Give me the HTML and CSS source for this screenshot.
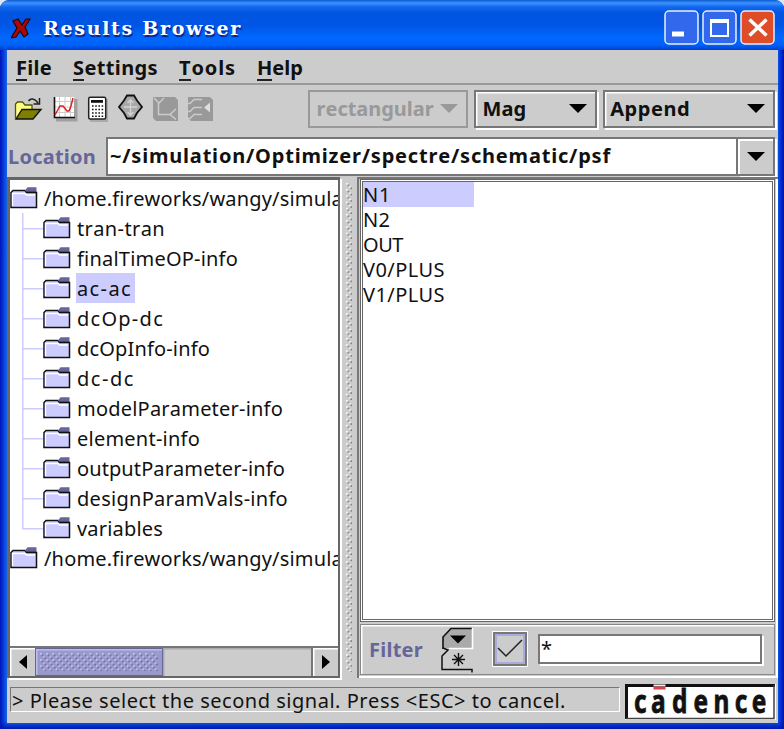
FILE: index.html
```html
<!DOCTYPE html>
<html lang="en">
<head>
<meta charset="utf-8">
<title>Results Browser</title>
<link rel="stylesheet" href="styles.css">
</head>
<body>
<svg class="defs" width="0" height="0">
  <defs>
    <pattern id="bumps" width="6.2" height="6.2" patternUnits="userSpaceOnUse">
      <path d="M0 0h1.6v1.6H0zM3.1 3.1h1.6v1.6H3.1z" fill="#fff"/>
      <path d="M1.5 1.5h1.6v1.6H1.5zM4.6 4.6h1.6v1.6H4.6z" fill="#777"/>
    </pattern>
    <pattern id="thumb-bumps" width="6.2" height="6.2" patternUnits="userSpaceOnUse">
      <path d="M0 0h1.6v1.6H0zM3.1 3.1h1.6v1.6H3.1z" fill="#ccf"/>
      <path d="M1.5 1.5h1.6v1.6H1.5zM4.6 4.6h1.6v1.6H4.6z" fill="#669"/>
    </pattern>
    <symbol id="folder" viewBox="0 0 28 24">
      <path d="M1 21.5V6.5L3 4.5H15L16.500 6.500H26.500V21.500Z" fill="#ccf" stroke="#111" stroke-width="1.5"/>
      <path d="M2.500 20V7.500H15L16.500 9H25" fill="none" stroke="#fff" stroke-width="1.300"/>
      <path d="M15 4.500L17.500 1.200H26.500V5H15.500Z" fill="#669"/>
      <path d="M16 5.500H26.500" stroke="#447" stroke-width="1"/>
    </symbol>
  </defs>
</svg>
<div class="window">
  <header class="titlebar">
    <svg class="app-icon" width="20" height="22" viewBox="11 17 20 22"><path d="M13 21l5-2 4 6 4-6 4 0-5 8 3 7-4 3-4-6-4 6-5 1 6-10z" fill="#a80808" stroke="#300" stroke-width="1.200"/></svg>
    <h1><span class="t" data-w="198">Results Browser</span></h1>
    <div class="controls">
      <svg width="35" height="35"><rect class="cb blue" x="1" y="1" width="33" height="33" rx="4"/><path d="M8 21.500h12v5H8z" fill="#fff"/></svg>
      <svg width="35" height="35"><rect class="cb blue" x="1" y="1" width="33" height="33" rx="4"/><path d="M8 9h19v18H8zM10 13v12h15V13z" fill="#fff" fill-rule="evenodd"/></svg>
      <svg width="35" height="35"><rect class="cb red" x="1" y="1" width="33" height="33" rx="4"/><path d="M9.500 9.500l17 16M26.500 9.500l-17 16" stroke="#fff" stroke-width="3.500"/></svg>
    </div>
  </header>
  <main class="client">
    <nav class="menubar">
      <span class="t" data-w="35"><u>F</u>ile</span>
      <span class="t" data-w="84"><u>S</u>ettings</span>
      <span class="t" data-w="56"><u>T</u>ools</span>
      <span class="t" data-w="45"><u>H</u>elp</span>
    </nav>
    <div class="toolbar">
      <div class="tools">
        <svg width="30" height="32" viewBox="14 92 30 32"><path d="M15.500 118.500V104l2-2h5l2.500 3h7v5" fill="#ffff80" stroke="#550" stroke-width="1.300"/><path d="M16 119l6-9.500h19l-8 9.500z" fill="#808000" stroke="#111" stroke-width="1.400"/><path d="M28.500 101c2-3 6-3 9.500 2M39.500 98v6h-6" fill="none" stroke="#222" stroke-width="1.500"/></svg>
        <svg width="28" height="32" viewBox="52 92 28 32"><path d="M57 99h21.500v22.500H57z" fill="#a0a0a0"/><path d="M55 97h20v20H55z" fill="#fff"/><path d="M60.500 97v20M66 97v20M71.500 97v20M55 101.500h20M55 107h20M55 112.500h20" stroke="#ccc" stroke-width="1"/><path d="M55.500 97v20.500H76" fill="none" stroke="#111" stroke-width="1.600"/><path d="M56 115l5-9h3l4 5h2l2-5 2-8" fill="none" stroke="#d22" stroke-width="1.500"/></svg>
        <svg width="24" height="32" viewBox="86 92 24 32"><path d="M90 99h18v23H90z" fill="#aaa"/><rect x="88.700" y="97.200" width="17" height="21.800" rx="1.500" fill="#fff" stroke="#222" stroke-width="1.500"/><path d="M91 100h12v2.800H91z" fill="#111"/><path d="M92 106h12M92 109.500h12M92 113h12M92 116.300h12" stroke="#111" stroke-width="1.500" stroke-dasharray="1.600 1.600"/></svg>
        <svg width="28" height="32" viewBox="117 92 28 32"><path d="M127 95.500h7l3 5 5 6.500-5 6-3 5.500h-7l-3-5.500-5-6 5-6.500z" fill="#a8a8a8" stroke="#111" stroke-width="1.800"/><path d="M130.500 99v17M124 107h13M127.500 103l3-3 3 3M127.500 112l3 3 3-3" fill="none" stroke="#d4d4d4" stroke-width="1.300"/></svg>
        <svg width="28" height="32" viewBox="152 92 28 32"><path d="M153 97h22l3 3v21h-22l-3-3z" fill="#999"/><path d="M154 98l5 5 5-5M158.500 103v11.500h11M176 109l-6 5.500 6 5" fill="none" stroke="#ccc" stroke-width="1.500"/></svg>
        <svg width="28" height="32" viewBox="185 92 28 32"><path d="M186 97h22l3 3v21h-22l-3-3z" fill="#999"/><path d="M186 103.500h2l4-4h8M186 111.500h2l4-4h8M186 118.500h2l4-4h8" fill="none" stroke="#ccc" stroke-width="1.500"/><path d="M202 107.500l6-5v10z" fill="#ddd"/></svg>
      </div>
      <div class="combo off rect"><span class="t" data-w="116">rectangular</span><svg width="18" height="10"><path d="M0 0h18L9 9z"/></svg></div>
      <div class="combo mag"><span class="t" data-w="43">Mag</span><svg width="18" height="10"><path d="M0 0h18L9 9z"/></svg></div>
      <div class="combo append"><span class="t" data-w="79">Append</span><svg width="18" height="10"><path d="M0 0h18L9 9z"/></svg></div>
    </div>
    <div class="location">
      <label><span class="t" data-w="87">Location</span></label>
      <div class="path"><span class="t" data-w="500">~/simulation/Optimizer/spectre/schematic/psf</span></div>
      <div class="drop"><svg width="18" height="10"><path d="M0 0h18L9 9z"/></svg></div>
    </div>
    <div class="split">
      <section class="left">
        <ul class="tree">
          <li><svg class="f"><use href="#folder"/></svg><span class="label"><span class="t" data-w="298">/home.fireworks/wangy/simula</span></span></li>
          <li class="c"><i></i><svg class="f"><use href="#folder"/></svg><span class="label"><span class="t" data-w="87">tran-tran</span></span></li>
          <li class="c"><i></i><svg class="f"><use href="#folder"/></svg><span class="label"><span class="t" data-w="160">finalTimeOP-info</span></span></li>
          <li class="c"><i></i><svg class="f"><use href="#folder"/></svg><span class="label sel"><span class="t" data-w="54">ac-ac</span></span></li>
          <li class="c"><i></i><svg class="f"><use href="#folder"/></svg><span class="label"><span class="t" data-w="86">dcOp-dc</span></span></li>
          <li class="c"><i></i><svg class="f"><use href="#folder"/></svg><span class="label"><span class="t" data-w="132">dcOpInfo-info</span></span></li>
          <li class="c"><i></i><svg class="f"><use href="#folder"/></svg><span class="label"><span class="t" data-w="57">dc-dc</span></span></li>
          <li class="c"><i></i><svg class="f"><use href="#folder"/></svg><span class="label"><span class="t" data-w="205">modelParameter-info</span></span></li>
          <li class="c"><i></i><svg class="f"><use href="#folder"/></svg><span class="label"><span class="t" data-w="122">element-info</span></span></li>
          <li class="c"><i></i><svg class="f"><use href="#folder"/></svg><span class="label"><span class="t" data-w="207">outputParameter-info</span></span></li>
          <li class="c"><i></i><svg class="f"><use href="#folder"/></svg><span class="label"><span class="t" data-w="210">designParamVals-info</span></span></li>
          <li class="c last"><i></i><svg class="f"><use href="#folder"/></svg><span class="label"><span class="t" data-w="85">variables</span></span></li>
          <li><svg class="f"><use href="#folder"/></svg><span class="label"><span class="t" data-w="298">/home.fireworks/wangy/simula</span></span></li>
        </ul>
        <div class="scroll">
          <div class="arrow"><svg width="8" height="14"><path d="M8 0v14L0 7z"/></svg></div>
          <div class="thumb"><svg width="118" height="18"><rect width="118" height="18" fill="url(#thumb-bumps)"/></svg></div>
          <div class="track"></div>
          <div class="arrow end"><svg width="8" height="14"><path d="M0 0v14L8 7z"/></svg></div>
        </div>
      </section>
      <div class="divider"><svg width="6.200" height="489"><rect width="6.200" height="489" fill="url(#bumps)"/></svg></div>
      <section class="right">
        <ul class="list">
          <li class="sel"><span class="t" data-w="27">N1</span></li>
          <li><span class="t" data-w="26">N2</span></li>
          <li><span class="t" data-w="39">OUT</span></li>
          <li><span class="t" data-w="81">V0/PLUS</span></li>
          <li><span class="t" data-w="81">V1/PLUS</span></li>
        </ul>
        <div class="filter">
          <label><span class="t" data-w="53">Filter</span></label>
          <svg class="toggle" width="34" height="46" viewBox="440 627 34 46"><path d="M443 648V637l8-8h21v19z" fill="#aaa"/><path d="M443 649V637l8-8.500h21" fill="none" stroke="#111" stroke-width="1.600"/><path d="M472.500 628v20.500H449" fill="none" stroke="#fff" stroke-width="1.600"/><path d="M450 635.500h16l-8 8z"/><path d="M443 648l5 2-6 6v13.500h6M448 669.500h24v3" fill="none" stroke="#111" stroke-width="1.500"/><path d="M458.500 653v13M452 659.500h13M454 655l9 9M463 655l-9 9" stroke="#111" stroke-width="1.400"/></svg>
          <div class="check"><svg width="26" height="20"><path d="M1 9l8 8L25 1" fill="none" stroke="#222" stroke-width="1.500"/></svg></div>
          <div class="input">*</div>
        </div>
      </section>
    </div>
    <footer class="status">
      <div class="message"><span class="t" data-w="553">&gt; Please select the second signal. Press &lt;ESC&gt; to cancel.</span></div>
      <svg class="logo" width="151" height="36" viewBox="625 685 151 36"><path d="M625 685h151v36H625z" fill="#fff"/><path d="M626.500 720V686.500H775" fill="none" stroke="#111" stroke-width="3"/><path d="M774 686v33.500H626" fill="none" stroke="#444" stroke-width="1.500"/><path d="M653.500 685.500h12v2h-12z" fill="#eee"/><path d="M653.500 687.500h12v3h-12z" fill="#d8404c"/><text class="logotype" transform="translate(634 713.500) scale(.74 1)" x="0 23 51.500 80.500 107.500 136 159" y="0">cadence</text></svg>
    </footer>
  </main>
</div>
<script src="fit.js"></script>
</body>
</html>
```
FILE: fit.js
```js
// Tracks each label out or in so that it fills its nominal width.
document.querySelectorAll('.t').forEach(function (el) {
  var n = el.textContent.length;
  var w = el.getBoundingClientRect().width;
  el.style.letterSpacing = ((Number(el.dataset.w) + 1 - w) / n).toFixed(3) + 'px';
});
```
FILE: styles.css
```css
* { box-sizing: border-box; }
body { margin: 0; background: #dde4f4; font: 20px/24px "Noto Sans", sans-serif; color: #111; overflow: hidden; }
ul { list-style: none; margin: 0; padding: 0; }
svg { display: block; flex: none; }
.defs { position: absolute; }
.t { display: inline-block; white-space: pre; font-kerning: none; font-variant-ligatures: none; }

.window { width: 784px; height: 729px; padding: 0 6px 6px 7px; border-radius: 9px 9px 0 0; display: flex; flex-direction: column;
  background: linear-gradient(90deg, #0014bd 0, #0538d4 3px, #1264ed 7px, #0a50e4 778px, #0030d8 781px, #000f98 784px);
  box-shadow: inset 0 -6px 5px -2px #0018b0; }
.titlebar { height: 50px; flex: none; margin: 0 -6px 0 -7px; padding: 5px 9px 0 11px; display: flex; align-items: center; border-radius: 9px 9px 0 0;
  background: linear-gradient(#0a5bd0 0, #3c94ff 3px, #1266ee 7px, #0054e0 13px, #0055e5 25px, #0068ff 38px, #0062f8 45px, #003dd0 50px); }
h1 { margin: 0 auto 0 12px; font: 700 19px/24px "DejaVu Serif", serif; color: #fff; text-shadow: 1px 2px 1px #0a1f8c; }
.controls { display: flex; gap: 3px; }
.cb { stroke: #e8eeff; stroke-width: 1.5; }
.blue { fill: #3268ec; }
.red { fill: #df4c28; }

.client { flex: 1; min-height: 0; background: #ccc; display: flex; flex-direction: column; }
.menubar { height: 35px; flex: none; border-bottom: 2px solid #999; padding: 6px 0 0 9px; display: flex; gap: 21px; font-weight: 700; }
.menubar u { text-decoration: none; box-shadow: 0 -1px transparent, 0 2px #222; display: inline-block; height: 23px; }
.toolbar { height: 52px; flex: none; display: flex; padding: 5px 3px 0 7px; font-weight: 700; }
.tools { display: flex; padding-top: 2px; width: 294px; gap: 7px; }
.combo { height: 38px; border: 2px solid #777; box-shadow: inset 1.500px 1.500px #fff, 2px 2px #fff; display: flex; align-items: center; justify-content: space-between; padding: 0 8px 0 6px; }
.rect { width: 161px; }
.mag { width: 123px; margin-left: 6px; }
.append { width: 172px; margin-left: 6px; padding-left: 5px; }
.off { color: #999; fill: #999; border-color: #999; box-shadow: none; padding-left: 7px; }
.location { height: 39px; flex: none; display: flex; padding-right: 3px; font-weight: 700; }
label { color: #669; font-weight: 700; }
.location label { width: 99px; padding: 8px 0 0 1px; }
.path { width: 632px; background: #fff; border: 2px solid #777; padding: 5px 0 0 2px; }
.drop { flex: 1; border: 2px solid #777; border-left: 0; box-shadow: inset 2px 2px #fff, 2px 2px #fff; display: flex; align-items: center; justify-content: center; }

.split { height: 502px; flex: none; display: flex; padding-top: 1px; }
.left { width: 333px; border: solid #666; border-width: 3px 2px 2px 3px; box-shadow: 2px 2px #fff; display: flex; flex-direction: column; }
.tree { height: 466px; flex: none; background: #fff; overflow: hidden; padding-top: 3px; }
.tree li { height: 30px; display: flex; align-items: center; }
.tree .c { padding-left: 12px; }
.tree i { width: 21px; height: 30px; flex: none; background: linear-gradient(#ccf, #ccf) 0 0/1.500px 100% no-repeat, linear-gradient(#ccf, #ccf) 0 15px/100% 1.500px no-repeat; }
.tree .last i { background-size: 1.500px 15px, 100% 1.500px; }
.f { width: 28px; height: 24px; margin-top: -1px; }
.label { height: 30px; padding: 4px 3px 0 1px; margin-left: 5px; white-space: nowrap; }
.sel { background: #ccf; }
.scroll { flex: 1; border-top: 2px solid #777; display: flex; }
.arrow { width: 25px; display: flex; align-items: center; justify-content: center; box-shadow: inset 1.500px 1.500px #fff; }
.thumb { width: 128px; background: #99c; border: 1.500px solid #669; box-shadow: inset 1.500px 1.500px #bbe; display: flex; align-items: center; justify-content: center; }
.track { flex: 1; box-shadow: inset 1.500px 1.500px #aaa; }
.end { border-left: 2px solid #777; width: 27px; }
.divider { width: 17px; padding: 6px 0 0 6px; }
.right { width: 421px; border-left: 2px solid #777; border-top: 2px solid #777; box-shadow: inset -2px -2px #fff; padding: 0 3px 3px 1px; display: flex; flex-direction: column; }
.list { height: 443px; flex: none; background: #fff; border: 3px double #666; border-width: 3px; }
.list li { height: 25px; line-height: 26px; }
.list .sel { width: 111px; }
.filter { flex: 1; border: 1.500px solid #888; box-shadow: inset 1.500px 1.500px #fff; margin-top: 2px; display: flex; align-items: flex-start; padding-left: 8px; }
.filter label { width: 71px; padding-top: 13px; }
.toggle { margin-top: 2px; }
.check { width: 34px; height: 34px; margin: 7px 0 0 19px; border: 2px solid #777; outline: 1.500px solid #fff; box-shadow: inset 0 0 0 2px #aad; display: flex; align-items: center; justify-content: center; }
.input { width: 224px; height: 30px; margin: 9px 0 0 11px; background: #fff; border: 2px solid #777; box-shadow: 2px 2px #fff; padding: 1px; }

.status { flex: 1; display: flex; padding: 6px 2px 0 3px; }
.message { width: 610px; height: 25px; margin: 3px 5px 0 0; border: 1.500px solid #777; border-color: #777 #fff #fff #777; line-height: 25px; padding-left: 1px; }
.message .t { line-height: 25px; }
.logo { overflow: visible; }
.logotype { font: 700 33px "Noto Sans", sans-serif; fill: #111; stroke: #111; stroke-width: .8px; }
```
